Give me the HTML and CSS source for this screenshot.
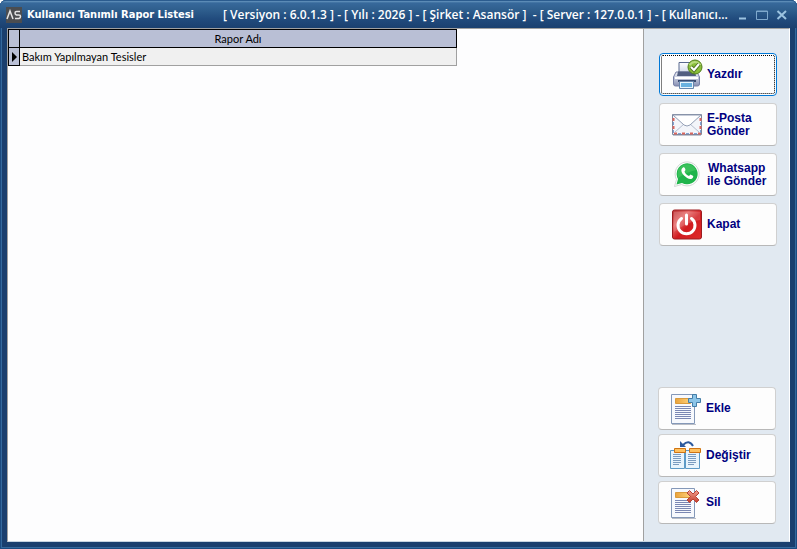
FILE: index.html
```
<!DOCTYPE html>
<html lang="tr">
<head>
  <meta charset="UTF-8" />
  <meta name="viewport" content="width=device-width, initial-scale=1" />
  <title>Kullanıcı Tanımlı Rapor Listesi</title>
  <link rel="stylesheet" href="styles.css">
</head>
<body>
  <div class="window">
    <header class="titlebar">
      <svg class="logo" viewBox="0 0 16 16" aria-hidden="true">
        <rect width="16" height="16" fill="#4b4d50" />
        <path d="M1 12L4 4L7 12M14 4.500H10.500Q9 4.500 9 6T10.500 8H13Q14.500 8 14.500 9.500T13 11.500H9" fill="none" stroke="#e4e4e4" stroke-width="1.500" />
      </svg>
      <h1>Kullanıcı Tanımlı Rapor Listesi</h1>
      <p class="info">[ Versiyon : 6.0.1.3 ] - [ Yılı : 2026 ] - [ Şirket : Asansör ]&nbsp; - [ Server : 127.0.0.1 ] - [ Kullanıcı...</p>
      <div class="controls">
        <button type="button" aria-label="Simge durumuna küçült">
          <svg viewBox="0 0 12 12"><path d="M3 9.500H10" stroke="#9cc3e0" stroke-width="2" /></svg>
        </button>
        <button type="button" aria-label="Ekranı kapla">
          <svg viewBox="0 0 12 12"><path d="M.5 2H11.500V10.500H.5ZM0 2.500H12" fill="none" stroke="#7fa9cd" /></svg>
        </button>
        <button type="button" aria-label="Pencereyi kapat">
          <svg viewBox="0 0 12 12"><path d="M1.500 2L10 10M10 2L1.500 10" stroke="#9cc3e0" stroke-width="2" /></svg>
        </button>
      </div>
    </header>

    <div class="client">
      <main class="grid-area">
        <table class="grid">
          <thead>
            <tr><th class="marker"></th><th>Rapor Adı</th></tr>
          </thead>
          <tbody>
            <tr>
              <td class="marker"><svg viewBox="0 0 5 10" aria-hidden="true"><path d="M0 0L5 5L0 10Z" /></svg></td>
              <td>Bakım Yapılmayan Tesisler</td>
            </tr>
          </tbody>
        </table>
      </main>

      <aside class="sidebar">
        <div class="actions">
          <button type="button" class="action selected">
            <svg viewBox="0 0 32 32" aria-hidden="true">
              <defs>
                <linearGradient id="printer" x2="0" y2="1"><stop stop-color="#eef1f8" /><stop offset="1" stop-color="#8790b4" /></linearGradient>
                <linearGradient id="paper" x2="0" y2="1"><stop stop-color="#ffffff" /><stop offset="1" stop-color="#cbd4e6" /></linearGradient>
              </defs>
              <path d="M8 15V3.500H22V15Z" fill="url(#paper)" stroke="#59688e" />
              <path d="M5 13H26L28.500 18V25Q28.500 27 26.500 27H4.500Q2.500 27 2.500 25V18Z" fill="url(#printer)" stroke="#7780a6" />
              <path d="M7 12.500H24L25 17H6Z" fill="#525f81" />
              <path d="M4 19H27" stroke="#fff" stroke-width="2" />
              <path d="M7 22H25" stroke="#394b71" stroke-width="2" />
              <path d="M8.500 22.500H22.500V29.500H8.500Z" fill="#e8f4fc" stroke="#6686ac" />
              <path d="M10 24H21V28H10Z" fill="#69b1df" />
              <circle cx="24" cy="8" r="7" fill="#8abf3a" stroke="#527d1c" />
              <path d="M18.500 6Q23.500 0 29.500 6" fill="none" stroke="#b8db7d" stroke-width="2" />
              <path d="M20 8L23 11L28 5" fill="none" stroke="#527621" stroke-width="4" />
              <path d="M20 8L23 11L28 5" fill="none" stroke="#fff" stroke-width="2" />
            </svg>
            <span>Yazdır</span>
          </button>
          <button type="button" class="action">
            <svg viewBox="0 0 32 32" aria-hidden="true">
              <path d="M1.500 5.500H30.500V25.500H1.500Z" fill="#f3f5fa" stroke="#7e879d" />
              <path d="M2.500 9V25M29.500 9V25M3 24.500H30" fill="none" stroke="#d9665e" stroke-width="2" stroke-dasharray="3 5" />
              <path d="M2.500 13V25M29.500 13V25M7 24.500H30" fill="none" stroke="#7fa0d2" stroke-dasharray="3 5" />
              <path d="M4 23L13 15M28 23L19 15" stroke="#b5bed0" />
              <path d="M2 6L13 16Q16 18 19 16L30 6Z" fill="#fff" stroke="#929eb5" />
              <path d="M2 26.500H30" stroke="#bfc4cf" />
            </svg>
            <span>E-Posta<br>Gönder</span>
          </button>
          <button type="button" class="action">
            <svg viewBox="0 0 32 32" aria-hidden="true">
              <path d="M3.500 27.500L5.500 20.500A12 12 0 1 1 10.500 25.500Z" fill="#fff" stroke="#d3d7d5" />
              <path d="M5.500 25.500L7 20A10.500 10.500 0 1 1 11 24Z" fill="#1fb44b" />
              <path d="M7 11A10 10 0 0 1 25 11Q16 13 7 19Q6 15 7 11Z" fill="#5bd06f" opacity=".45" />
              <path d="M12 8.500C9.500 10 10 13.500 13 16.500S20 21.500 22 18.500C23 17 21.500 16.500 19.500 15.500L18 17C16 16.500 14 14.500 13.500 12.500L14.500 11C14 9 13.500 8 12 8.500Z" fill="#fff" />
            </svg>
            <span class="center">Whatsapp<br>ile Gönder</span>
          </button>
          <button type="button" class="action">
            <svg viewBox="0 0 32 32" aria-hidden="true">
              <defs>
                <linearGradient id="power" x2="1" y2="1"><stop stop-color="#b93436" /><stop offset=".3" stop-color="#e66a6a" /><stop offset=".55" stop-color="#d01c20" /><stop offset="1" stop-color="#e02a2a" /></linearGradient>
              </defs>
              <rect x="1.500" y="1" width="29" height="29" rx="2" fill="url(#power)" stroke="#9c1c20" />
              <path d="M3 3H29V11Q18 12 3 23Z" fill="#fff" opacity=".15" />
              <path d="M10.500 9.500A8.500 8.500 0 1 0 20.500 9.500" fill="none" stroke="#fff" stroke-width="3" stroke-linecap="round" />
              <path d="M15.500 6V15" stroke="#fff" stroke-width="3" stroke-linecap="round" />
            </svg>
            <span>Kapat</span>
          </button>
        </div>

        <div class="actions edit">
          <button type="button" class="action">
            <svg viewBox="0 0 32 32" aria-hidden="true">
              <defs>
                <linearGradient id="bar"><stop stop-color="#e9a23b" /><stop offset="1" stop-color="#ffd27a" /></linearGradient>
                <linearGradient id="cross" x2="0" y2="1"><stop stop-color="#f2a08e" /><stop offset="1" stop-color="#c33d2c" /></linearGradient>
                <g id="sheet">
                  <path d="M2 31.500H26" stroke="#b9bdc6" />
                  <path d="M1.500 1.500H24.500V30.500H1.500Z" fill="#f7f9fd" stroke="#8498b8" />
                  <path d="M5.500 5.500H20.500V10.500H5.500Z" fill="url(#bar)" stroke="#d99a3c" />
                  <path d="M5 13.500H21M5 15.500H21M5 17.500H21M5 19.500H21M5 21.500H21M5 23.500H21M5 25.500H21" stroke="#7a87b3" />
                </g>
              </defs>
              <use href="#sheet" />
              <path d="M22.500 1.500H26.500V5.500H30.500V9.500H26.500V13.500H22.500V9.500H18.500V5.500H22.500Z" fill="#8cc5e8" stroke="#437da7" />
            </svg>
            <span>Ekle</span>
          </button>
          <button type="button" class="action">
            <svg viewBox="0 0 32 32" aria-hidden="true">
              <path d="M.5 10.500H14.500V28.500H.5ZM15.500 10.500H29.500V28.500H15.500Z" fill="#e8f4fc" stroke="#5d9ac6" />
              <path d="M3 14.500H11M3 16.500H11M3 18.500H11M3 20.500H11M3 22.500H11M3 24.500H9M18 14.500H26M18 16.500H26M18 18.500H26M18 20.500H26M18 22.500H26M18 24.500H24" stroke="#7a9bbf" />
              <path d="M4.500 8.500H15.500V12.500H4.500ZM19.500 8.500H30.500V12.500H19.500Z" fill="#ffc15e" stroke="#cf7413" />
              <path d="M13 5Q19 -1 23 6" fill="none" stroke="#2c5a9e" stroke-width="2" />
              <path d="M10 1V7H16Z" fill="#2c5a9e" />
            </svg>
            <span>Değiştir</span>
          </button>
          <button type="button" class="action">
            <svg viewBox="0 0 32 32" aria-hidden="true">
              <use href="#sheet" />
              <path d="M19.500 3.500L23 7L26.500 3.500L29 6L25.500 9.500L29 13L26.500 15.500L23 12L19.500 15.500L17 13L20.500 9.500L17 6Z" fill="url(#cross)" stroke="#b84234" />
            </svg>
            <span>Sil</span>
          </button>
        </div>
      </aside>
    </div>
  </div>
</body>
</html>
```
FILE: styles.css
```
* {
  box-sizing: border-box;
}
body {
  margin: 0;
  font-family: "Liberation Sans", Arial, sans-serif;
  font-size: 11px;
  color: #000;
}
.window {
  display: flex;
  flex-direction: column;
  min-height: 100vh;
  padding: 0 7px 7px;
  background: #1a3f6e;
  border-radius: 6px 6px 0 0;
  box-shadow: inset 0 0 0 1px #1c4b80, inset 0 0 0 2px #34699d;
}
.titlebar {
  display: flex;
  align-items: center;
  height: 28px;
  margin: 0 -7px;
  padding: 0 9px 0 6px;
  border-radius: 6px 6px 0 0;
  border-top: 1px solid #2b5c8f;
  background: linear-gradient(#6796bf 0, #37699b 2px, #30608f 8px, #214b7d 18px, #1a3f6e 28px);
  color: #fff;
  font-family: "DejaVu Sans Condensed", Tahoma, sans-serif;
  font-size: 11px;
  font-weight: bold;
  white-space: nowrap;
}
.logo {
  flex: none;
  width: 16px;
  height: 16px;
  margin-right: 5px;
}
h1 {
  margin: 0 29px 0 0;
  font-size: 11px;
}
.info {
  flex: 1;
  min-width: 0;
  margin: 0;
  font-family: "Open Sans", Tahoma, sans-serif;
  font-size: 12px;
  font-weight: 600;
}
.controls {
  display: flex;
  gap: 8px;
}
.controls button {
  width: 12px;
  height: 12px;
  padding: 0;
  border: none;
  background: none;
}
.controls svg {
  display: block;
}
.client {
  display: flex;
  flex: 1;
  border: 1px solid #a0a0a0;
  border-right-color: #fff;
  border-bottom-color: #c5d3e0;
}
.grid-area {
  flex: 1;
  background: #fdfdfe;
}
.grid {
  width: 449px;
  border-collapse: collapse;
  font-family: Lato, "Liberation Sans", sans-serif;
}
.grid th,
.grid td {
  height: 18px;
  padding: 0 2px;
  line-height: 16px;
}
.grid th {
  border: 1px solid #000;
  background: #b9bfd5;
  font-weight: normal;
}
.grid td {
  border: 1px solid #a0a0a0;
  background: #f0f0f0;
}
.grid .marker {
  width: 11px;
  border: 1px solid #000;
  background: #b9bfd5;
}
.marker svg {
  display: block;
  width: 5px;
  height: 10px;
  margin-left: 1px;
}
.sidebar {
  display: flex;
  flex-direction: column;
  justify-content: space-between;
  width: 146px;
  padding: 24px 12px 17px 15px;
  border-left: 1px solid #a0a0a0;
  background: #e1e9f1;
}
.actions {
  display: flex;
  flex-direction: column;
  gap: 7px;
}
.edit {
  gap: 4px;
  margin: 0 1px 0 -1px;
}
.action {
  display: flex;
  align-items: center;
  gap: 4px;
  height: 43px;
  padding: 0 0 0 11px;
  border: 1px solid #d0d0d0;
  border-bottom-color: #b8b8b8;
  border-radius: 4px;
  background: #fdfdfd;
  color: #000080;
  font-family: inherit;
  font-size: 12px;
  font-weight: bold;
  line-height: 13px;
  text-align: left;
}
.action svg {
  flex: none;
  width: 32px;
  height: 32px;
}
.action.selected {
  border-color: #0078d7;
  outline: 1px dotted #000;
  outline-offset: -3px;
}
.action .center {
  text-align: center;
}
```
